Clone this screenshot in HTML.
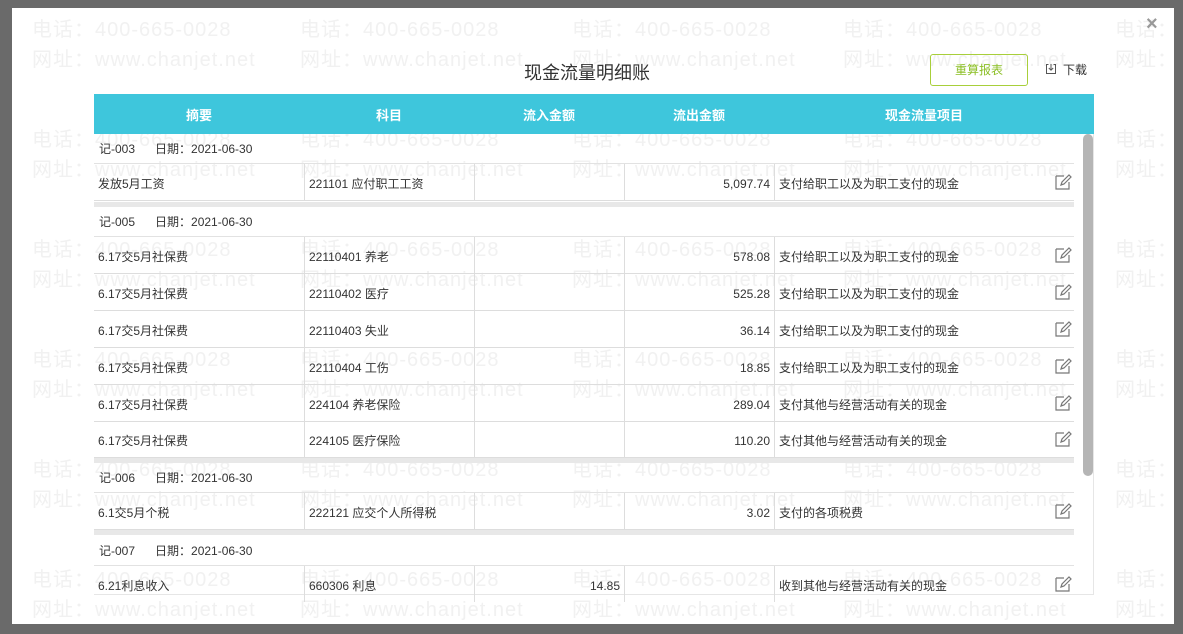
<!DOCTYPE html><html><head><meta charset="utf-8"><style>
*{margin:0;padding:0;box-sizing:border-box}
body{width:1183px;height:634px;background:#6a6a6a;position:relative;overflow:hidden;font-family:"Liberation Sans","Noto Sans CJK SC",sans-serif;font-size:12px;color:#333}
.modal{position:absolute;left:12px;top:8px;width:1162px;height:616px;background:#fff;overflow:hidden}
.wm{position:absolute;color:#f1f1f1;font-size:20px;letter-spacing:1px;white-space:nowrap;line-height:30px}
.a{position:absolute}
.hd{position:absolute;left:82px;top:86px;width:1000px;height:40px;background:#3ec6dc;color:#fff;font-size:13px;font-weight:bold}
.hd span{position:absolute;top:11px;text-align:center}
.g{position:absolute;left:82px;width:980px;height:30px;line-height:30px;padding-left:5px;border-bottom:1px solid #e2e2e2}
.r{position:absolute;left:82px;width:980px;height:37px;border-bottom:1px solid #ddd}
.r div{position:absolute;top:0;height:36px;line-height:40px;padding:0 4px;border-left:1px solid #ddd;white-space:nowrap}
.band{position:absolute;left:82px;width:980px;height:5px;background:#e8e8e8}
.ed{position:absolute;right:2px;top:9px;width:18px;height:18px}
</style></head><body>
<div class="modal">
<div class="wm" style="left:20px;top:7px">电话：400-665-0028<br>网址：www.chanjet.net</div>
<div class="wm" style="left:288px;top:7px">电话：400-665-0028<br>网址：www.chanjet.net</div>
<div class="wm" style="left:560px;top:7px">电话：400-665-0028<br>网址：www.chanjet.net</div>
<div class="wm" style="left:831px;top:7px">电话：400-665-0028<br>网址：www.chanjet.net</div>
<div class="wm" style="left:1103px;top:7px">电话：400-665-0028<br>网址：www.chanjet.net</div>
<div class="wm" style="left:20px;top:117px">电话：400-665-0028<br>网址：www.chanjet.net</div>
<div class="wm" style="left:288px;top:117px">电话：400-665-0028<br>网址：www.chanjet.net</div>
<div class="wm" style="left:560px;top:117px">电话：400-665-0028<br>网址：www.chanjet.net</div>
<div class="wm" style="left:831px;top:117px">电话：400-665-0028<br>网址：www.chanjet.net</div>
<div class="wm" style="left:1103px;top:117px">电话：400-665-0028<br>网址：www.chanjet.net</div>
<div class="wm" style="left:20px;top:227px">电话：400-665-0028<br>网址：www.chanjet.net</div>
<div class="wm" style="left:288px;top:227px">电话：400-665-0028<br>网址：www.chanjet.net</div>
<div class="wm" style="left:560px;top:227px">电话：400-665-0028<br>网址：www.chanjet.net</div>
<div class="wm" style="left:831px;top:227px">电话：400-665-0028<br>网址：www.chanjet.net</div>
<div class="wm" style="left:1103px;top:227px">电话：400-665-0028<br>网址：www.chanjet.net</div>
<div class="wm" style="left:20px;top:337px">电话：400-665-0028<br>网址：www.chanjet.net</div>
<div class="wm" style="left:288px;top:337px">电话：400-665-0028<br>网址：www.chanjet.net</div>
<div class="wm" style="left:560px;top:337px">电话：400-665-0028<br>网址：www.chanjet.net</div>
<div class="wm" style="left:831px;top:337px">电话：400-665-0028<br>网址：www.chanjet.net</div>
<div class="wm" style="left:1103px;top:337px">电话：400-665-0028<br>网址：www.chanjet.net</div>
<div class="wm" style="left:20px;top:447px">电话：400-665-0028<br>网址：www.chanjet.net</div>
<div class="wm" style="left:288px;top:447px">电话：400-665-0028<br>网址：www.chanjet.net</div>
<div class="wm" style="left:560px;top:447px">电话：400-665-0028<br>网址：www.chanjet.net</div>
<div class="wm" style="left:831px;top:447px">电话：400-665-0028<br>网址：www.chanjet.net</div>
<div class="wm" style="left:1103px;top:447px">电话：400-665-0028<br>网址：www.chanjet.net</div>
<div class="wm" style="left:20px;top:557px">电话：400-665-0028<br>网址：www.chanjet.net</div>
<div class="wm" style="left:288px;top:557px">电话：400-665-0028<br>网址：www.chanjet.net</div>
<div class="wm" style="left:560px;top:557px">电话：400-665-0028<br>网址：www.chanjet.net</div>
<div class="wm" style="left:831px;top:557px">电话：400-665-0028<br>网址：www.chanjet.net</div>
<div class="wm" style="left:1103px;top:557px">电话：400-665-0028<br>网址：www.chanjet.net</div>

<div class="a" style="left:1134px;top:5px;font-size:20px;color:#999;font-weight:bold">×</div>
<div class="a" style="left:512px;top:51px;font-size:18px;color:#333">现金流量明细账</div>
<div class="a" style="left:918px;top:46px;width:98px;height:32px;border:1px solid #a8cf3a;border-radius:3px;color:#8cbf26;text-align:center;line-height:30px;font-size:12px">重算报表</div>
<svg class="a" style="left:1033px;top:55px" width="12" height="12" viewBox="0 0 12 12"><path d="M3.5 1.5H1.5v9h9v-9H8.5" fill="none" stroke="#555"/><path d="M6 1v6M3.8 5l2.2 2.2L8.2 5" fill="none" stroke="#555"/></svg>
<div class="a" style="left:1051px;top:53px;font-size:12px">下载</div>

<div class="hd"><span style="left:0;width:210px">摘要</span><span style="left:210px;width:170px">科目</span><span style="left:380px;width:150px">流入金额</span><span style="left:530px;width:150px">流出金额</span><span style="left:680px;width:300px">现金流量项目</span></div>
<div class="a" style="left:1071px;top:126px;width:10px;height:342px;background:#b5b5b5;border-radius:5px"></div>
<div class="a" style="left:1081px;top:126px;width:1px;height:460px;background:#e6e6e6"></div>
<div class="a" style="left:82px;top:586px;width:1000px;height:1px;background:#e6e6e6"></div>

<svg width="0" height="0" style="position:absolute"><defs><symbol id="e" viewBox="0 0 18 18"><path d="M2 3h8M2 3v13h13V9" fill="none" stroke="#777" stroke-width="1.2"/><path d="M7 12l1-3 7-7 2 2-7 7z" fill="none" stroke="#777" stroke-width="1.2"/></symbol></defs></svg>

<div class="g" style="top:126px">记-003&nbsp;&nbsp;&nbsp;&nbsp;&nbsp;&nbsp;日期：2021-06-30</div>
<div class="r" style="top:156px"><div style="left:0;border:0">发放5月工资</div><div style="left:210px">221101 应付职工工资</div><div style="left:380px;width:150px"></div><div style="left:530px;width:150px;text-align:right">5,097.74</div><div style="left:680px">支付给职工以及为职工支付的现金</div><svg class="ed"><use href="#e"/></svg></div>
<div class="band" style="top:194px"></div>

<div class="g" style="top:199px">记-005&nbsp;&nbsp;&nbsp;&nbsp;&nbsp;&nbsp;日期：2021-06-30</div>
<div class="r" style="top:229px"><div style="left:0;border:0">6.17交5月社保费</div><div style="left:210px">22110401 养老</div><div style="left:380px;width:150px"></div><div style="left:530px;width:150px;text-align:right">578.08</div><div style="left:680px">支付给职工以及为职工支付的现金</div><svg class="ed"><use href="#e"/></svg></div>
<div class="r" style="top:266px"><div style="left:0;border:0">6.17交5月社保费</div><div style="left:210px">22110402 医疗</div><div style="left:380px;width:150px"></div><div style="left:530px;width:150px;text-align:right">525.28</div><div style="left:680px">支付给职工以及为职工支付的现金</div><svg class="ed"><use href="#e"/></svg></div>
<div class="r" style="top:303px"><div style="left:0;border:0">6.17交5月社保费</div><div style="left:210px">22110403 失业</div><div style="left:380px;width:150px"></div><div style="left:530px;width:150px;text-align:right">36.14</div><div style="left:680px">支付给职工以及为职工支付的现金</div><svg class="ed"><use href="#e"/></svg></div>
<div class="r" style="top:340px"><div style="left:0;border:0">6.17交5月社保费</div><div style="left:210px">22110404 工伤</div><div style="left:380px;width:150px"></div><div style="left:530px;width:150px;text-align:right">18.85</div><div style="left:680px">支付给职工以及为职工支付的现金</div><svg class="ed"><use href="#e"/></svg></div>
<div class="r" style="top:377px"><div style="left:0;border:0">6.17交5月社保费</div><div style="left:210px">224104 养老保险</div><div style="left:380px;width:150px"></div><div style="left:530px;width:150px;text-align:right">289.04</div><div style="left:680px">支付其他与经营活动有关的现金</div><svg class="ed"><use href="#e"/></svg></div>
<div class="r" style="top:413px"><div style="left:0;border:0">6.17交5月社保费</div><div style="left:210px">224105 医疗保险</div><div style="left:380px;width:150px"></div><div style="left:530px;width:150px;text-align:right">110.20</div><div style="left:680px">支付其他与经营活动有关的现金</div><svg class="ed"><use href="#e"/></svg></div>
<div class="band" style="top:450px"></div>

<div class="g" style="top:455px">记-006&nbsp;&nbsp;&nbsp;&nbsp;&nbsp;&nbsp;日期：2021-06-30</div>
<div class="r" style="top:485px"><div style="left:0;border:0">6.1交5月个税</div><div style="left:210px">222121 应交个人所得税</div><div style="left:380px;width:150px"></div><div style="left:530px;width:150px;text-align:right">3.02</div><div style="left:680px">支付的各项税费</div><svg class="ed"><use href="#e"/></svg></div>
<div class="band" style="top:522px"></div>

<div class="g" style="top:528px">记-007&nbsp;&nbsp;&nbsp;&nbsp;&nbsp;&nbsp;日期：2021-06-30</div>
<div class="r" style="top:558px;border:0"><div style="left:0;border:0">6.21利息收入</div><div style="left:210px">660306 利息</div><div style="left:380px;width:150px;text-align:right">14.85</div><div style="left:530px;width:150px"></div><div style="left:680px">收到其他与经营活动有关的现金</div><svg class="ed"><use href="#e"/></svg></div>
</div>
</body></html>
